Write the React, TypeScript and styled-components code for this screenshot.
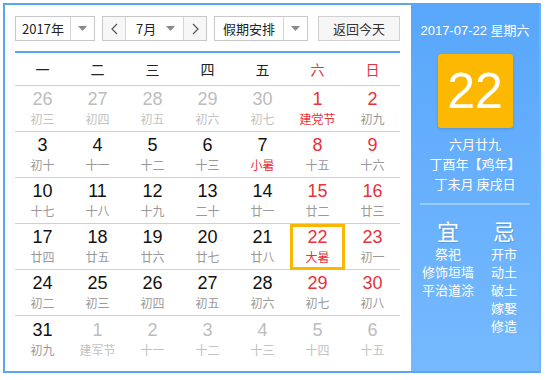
import React from "react";
import styled, { createGlobalStyle } from "styled-components";

const GlobalStyle = createGlobalStyle`
  html, body { margin: 0; padding: 0; background: #fff; }
  body { font-family: "Liberation Sans", "Noto Sans CJK SC", Arial, sans-serif; }
`;

type Day = { n: number; lunar: string; muted?: boolean; weekend?: boolean; fest?: boolean; today?: boolean };

const rows: Day[][] = [
  [
    { n: 26, lunar: "初三", muted: true },
    { n: 27, lunar: "初四", muted: true },
    { n: 28, lunar: "初五", muted: true },
    { n: 29, lunar: "初六", muted: true },
    { n: 30, lunar: "初七", muted: true },
    { n: 1, lunar: "建党节", weekend: true, fest: true },
    { n: 2, lunar: "初九", weekend: true },
  ],
  [
    { n: 3, lunar: "初十" },
    { n: 4, lunar: "十一" },
    { n: 5, lunar: "十二" },
    { n: 6, lunar: "十三" },
    { n: 7, lunar: "小暑", fest: true },
    { n: 8, lunar: "十五", weekend: true },
    { n: 9, lunar: "十六", weekend: true },
  ],
  [
    { n: 10, lunar: "十七" },
    { n: 11, lunar: "十八" },
    { n: 12, lunar: "十九" },
    { n: 13, lunar: "二十" },
    { n: 14, lunar: "廿一" },
    { n: 15, lunar: "廿二", weekend: true },
    { n: 16, lunar: "廿三", weekend: true },
  ],
  [
    { n: 17, lunar: "廿四" },
    { n: 18, lunar: "廿五" },
    { n: 19, lunar: "廿六" },
    { n: 20, lunar: "廿七" },
    { n: 21, lunar: "廿八" },
    { n: 22, lunar: "大暑", weekend: true, fest: true, today: true },
    { n: 23, lunar: "初一", weekend: true },
  ],
  [
    { n: 24, lunar: "初二" },
    { n: 25, lunar: "初三" },
    { n: 26, lunar: "初四" },
    { n: 27, lunar: "初五" },
    { n: 28, lunar: "初六" },
    { n: 29, lunar: "初七", weekend: true },
    { n: 30, lunar: "初八", weekend: true },
  ],
  [
    { n: 31, lunar: "初九" },
    { n: 1, lunar: "建军节", muted: true },
    { n: 2, lunar: "十一", muted: true },
    { n: 3, lunar: "十二", muted: true },
    { n: 4, lunar: "十三", muted: true },
    { n: 5, lunar: "十四", muted: true },
    { n: 6, lunar: "十五", muted: true },
  ],
];

const weekdays = ["一", "二", "三", "四", "五", "六", "日"];
const yi = ["祭祀", "修饰垣墙", "平治道涂"];
const ji = ["开市", "动土", "破土", "嫁娶", "修造"];

function Caret() {
  return (
    <svg width="9" height="5" viewBox="0 0 9 5">
      <path d="M0 0h9L4.5 5z" fill="#8a8a8a" />
    </svg>
  );
}

function Chevron({ dir }: { dir: "left" | "right" }) {
  return (
    <svg width="7" height="12" viewBox="0 0 7 12">
      <path
        d={dir === "left" ? "M6 1L1 6l5 5" : "M1 1l5 5-5 5"}
        fill="none"
        stroke="#555"
        strokeWidth="1.2"
      />
    </svg>
  );
}

export default function App() {
  return (
    <>
      <GlobalStyle />
      <Frame>
        <Main>
          <Toolbar>
            <Select $w={80}>
              <SelectText>2017年</SelectText>
              <SelectArrow><Caret /></SelectArrow>
            </Select>
            <MonthGroup>
              <NavBtn><Chevron dir="left" /></NavBtn>
              <MonthField>
                <MonthText>7月</MonthText>
                <Caret />
              </MonthField>
              <NavBtn><Chevron dir="right" /></NavBtn>
            </MonthGroup>
            <Select $w={94}>
              <SelectText>假期安排</SelectText>
              <SelectArrow><Caret /></SelectArrow>
            </Select>
            <TodayBtn>返回今天</TodayBtn>
          </Toolbar>

          <Grid>
            {weekdays.map((w, i) => (
              <WeekHead key={w} $red={i >= 5}>{w}</WeekHead>
            ))}
            {rows.flat().map((d, i) => (
              <Cell key={i} $today={!!d.today}>
                <Num $muted={!!d.muted} $red={!!d.weekend && !d.muted}>{d.n}</Num>
                <Lunar $muted={!!d.muted} $fest={!!d.fest && !d.muted}>{d.lunar}</Lunar>
              </Cell>
            ))}
          </Grid>
        </Main>

        <Side>
          <SideDate>2017-07-22 星期六</SideDate>
          <BigDay>22</BigDay>
          <LunarInfo>
            <div>六月廿九</div>
            <div>丁酉年【鸡年】</div>
            <div>丁未月 庚戌日</div>
          </LunarInfo>
          <Divider />
          <Almanac>
            <AlmanacCol $w={74}>
              <AlmanacHead>宜</AlmanacHead>
              {yi.map((t) => (
                <AlmanacItem key={t}>{t}</AlmanacItem>
              ))}
            </AlmanacCol>
            <AlmanacCol $w={38}>
              <AlmanacHead>忌</AlmanacHead>
              {ji.map((t) => (
                <AlmanacItem key={t}>{t}</AlmanacItem>
              ))}
            </AlmanacCol>
          </Almanac>
        </Side>
      </Frame>
    </>
  );
}

const Frame = styled.div`
  margin: 3px;
  width: 538px;
  height: 370px;
  box-sizing: border-box;
  border: 2px solid #5aa6f6;
  border-right-color: #6cb3fc;
  display: flex;
  overflow: hidden;
`;

const Main = styled.div`
  width: 406px;
  padding: 11px 11px 0 10px;
  box-sizing: border-box;
  background: #fff;
`;

const Toolbar = styled.div`
  display: flex;
  align-items: center;
  height: 25px;
  padding-bottom: 10px;
  border-bottom: 2px solid #5aa6f6;
  font-family: "Noto Sans CJK SC", sans-serif;
`;

const Select = styled.div<{ $w: number }>`
  width: ${(p) => p.$w}px;
  height: 25px;
  box-sizing: border-box;
  border: 1px solid #c8c8c8;
  display: flex;
  align-items: stretch;
  margin-right: 7px;
  background: #fff;
`;

const SelectText = styled.div`
  flex: 1;
  display: flex;
  align-items: center;
  justify-content: center;
  font-size: 13px;
  color: #222;
  border-right: 1px solid #d4d4d4;
`;

const SelectArrow = styled.div`
  width: 23px;
  display: flex;
  align-items: center;
  justify-content: center;
`;

const MonthGroup = styled.div`
  display: flex;
  height: 25px;
  width: 105px;
  box-sizing: border-box;
  border: 1px solid #c8c8c8;
  margin-right: 7px;
`;

const NavBtn = styled.div`
  width: 22px;
  display: flex;
  align-items: center;
  justify-content: center;
  background: #f7f7f7;
`;

const MonthField = styled.div`
  flex: 1;
  display: flex;
  align-items: center;
  justify-content: space-between;
  padding: 0 8px 0 10px;
  border-left: 1px solid #d4d4d4;
  border-right: 1px solid #d4d4d4;
`;

const MonthText = styled.span`
  font-size: 13px;
  color: #222;
`;

const TodayBtn = styled.div`
  margin-left: 3px;
  width: 82px;
  height: 25px;
  box-sizing: border-box;
  border: 1px solid #d0d0d0;
  background: #f6f6f6;
  display: flex;
  align-items: center;
  justify-content: center;
  font-size: 13px;
  color: #333;
`;

const Grid = styled.div`
  display: grid;
  grid-template-columns: repeat(7, 55px);
  grid-auto-rows: 46px;
  grid-template-rows: 33px;
`;

const WeekHead = styled.div<{ $red: boolean }>`
  display: flex;
  align-items: center;
  justify-content: center;
  border-bottom: 1px solid #cfcfcf;
  font-family: "Noto Sans CJK SC", sans-serif;
  font-size: 14px;
  color: ${(p) => (p.$red ? "#e8323b" : "#222")};
`;

const Cell = styled.div<{ $today: boolean }>`
  display: flex;
  flex-direction: column;
  align-items: center;
  justify-content: center;
  box-sizing: border-box;
  border-bottom: 1px solid #d0d0d0;
  outline: ${(p) => (p.$today ? "3px solid #fbb700" : "none")};
  outline-offset: -3px;
  padding-bottom: 1px;
  &:nth-last-child(-n + 7) {
    border-bottom: none;
  }
`;

const Num = styled.div<{ $muted: boolean; $red: boolean }>`
  font-family: "Liberation Sans", Arial, sans-serif;
  font-size: 18px;
  line-height: 20px;
  color: ${(p) => (p.$muted ? "#bdbdbd" : p.$red ? "#e8323b" : "#111")};
`;

const Lunar = styled.div<{ $muted: boolean; $fest: boolean }>`
  font-family: "Noto Sans CJK SC", sans-serif;
  font-size: 12px;
  line-height: 16px;
  margin-top: 2px;
  color: ${(p) => (p.$fest ? "#e8323b" : p.$muted ? "#c2c2c2" : "#999")};
`;

const Side = styled.div`
  flex: 1;
  background: linear-gradient(180deg, #58a7fb 0%, #76b9fe 100%);
  display: flex;
  flex-direction: column;
  align-items: center;
  color: #fff;
  font-family: "Noto Sans CJK SC", sans-serif;
  padding-top: 17px;
`;

const SideDate = styled.div`
  font-family: "Liberation Sans", "Noto Sans CJK SC", sans-serif;
  font-size: 13px;
  line-height: 18px;
`;

const BigDay = styled.div`
  margin-top: 14px;
  width: 75px;
  height: 74px;
  background: #fdb901;
  border-radius: 3px;
  box-shadow: 0 1px 3px rgba(0, 0, 0, 0.15);
  display: flex;
  align-items: center;
  justify-content: center;
  font-family: "Liberation Sans", Arial, sans-serif;
  font-size: 50px;
  color: #fff;
`;

const LunarInfo = styled.div`
  margin-top: 6px;
  text-align: center;
  font-size: 13px;
  line-height: 20px;
`;

const Divider = styled.div`
  margin-top: 9px;
  width: 110px;
  height: 2px;
  background: rgba(255, 255, 255, 0.35);
`;

const Almanac = styled.div`
  display: flex;
  width: 100%;
  margin-top: 11px;
`;

const AlmanacCol = styled.div<{ $w: number }>`
  width: ${(p) => p.$w}px;
  display: flex;
  flex-direction: column;
  align-items: center;
`;

const AlmanacHead = styled.div`
  font-size: 22px;
  line-height: 28px;
  margin-bottom: 1px;
  text-shadow: 1px 1px 1px rgba(0, 0, 0, 0.15);
`;

const AlmanacItem = styled.div`
  font-size: 13px;
  line-height: 18px;
  white-space: nowrap;
`;
